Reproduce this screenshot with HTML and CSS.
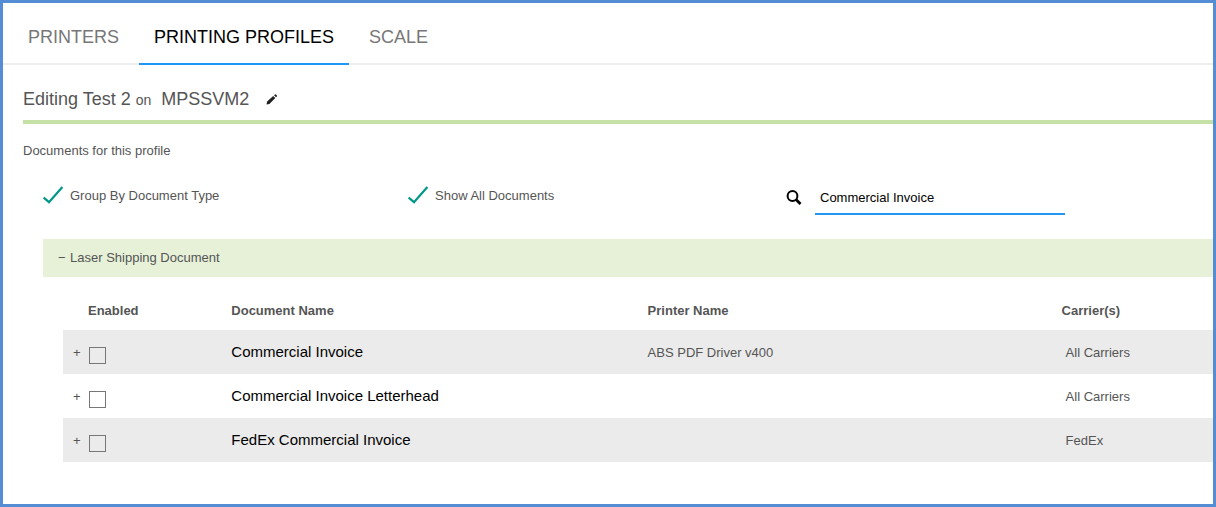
FILE: index.html
```html
<!DOCTYPE html>
<html lang="en">
<head>
<meta charset="utf-8">
<title>Printing Profiles</title>
<link rel="stylesheet" href="styles.css">
</head>
<body>
<div class="frame">
  <nav class="tabs">
    <a class="tab" href="#printers">PRINTERS</a>
    <a class="tab tab-active" href="#profiles" aria-current="page">PRINTING PROFILES</a>
    <a class="tab" href="#scale">SCALE</a>
  </nav>
  <main class="content">
    <header class="title-bar">
      <h1 class="title">Editing Test 2 <small class="title-on">on</small>&nbsp; MPSSVM2</h1>
      <button class="edit" type="button" aria-label="Edit profile">
        <svg width="12" height="12" viewBox="0 0 12 12"><path d="M.5 10.500l.6-2.900L7.200 1.900l2.100 2.100L3.400 9.900z M8 1.300l1-.9q.5-.3.9.1l1 1q.3.4-.1.9l-.8.9z" fill="#222"/></svg>
      </button>
    </header>
    <p class="subtitle">Documents for this profile</p>
    <div class="filters">
      <div class="filter">
        <input class="tick" type="checkbox" id="group" checked>
        <svg class="check" width="20" height="18" viewBox="0 0 20 18"><path d="M.6 11.500L6 16.200L19.400 1" fill="none" stroke="#009688" stroke-width="2.200"/></svg>
        <label for="group">Group By Document Type</label>
      </div>
      <div class="filter">
        <input class="tick" type="checkbox" id="all" checked>
        <svg class="check" width="20" height="18" viewBox="0 0 20 18"><path d="M.6 11.500L6 16.200L19.400 1" fill="none" stroke="#009688" stroke-width="2.200"/></svg>
        <label for="all">Show All Documents</label>
      </div>
      <div class="search">
        <svg width="16" height="16" viewBox="0 0 16 16" fill="none" stroke="#000"><circle cx="6.500" cy="6" r="4.900" stroke-width="2"/><path d="M10 9.500L14.500 14" stroke-width="2.800"/></svg>
        <input class="search-input" type="text" aria-label="Search documents" value="Commercial Invoice">
      </div>
    </div>
    <section class="group">
      <button class="group-head" type="button" aria-expanded="true"><span class="sign">−</span>Laser Shipping Document</button>
      <table class="docs">
        <thead>
          <tr><th class="col-enabled">Enabled</th><th class="col-name">Document Name</th><th class="col-printer">Printer Name</th><th>Carrier(s)</th></tr>
        </thead>
        <tbody>
          <tr>
            <td><div class="enable"><button class="expand" type="button" aria-label="Expand">+</button><input class="box" type="checkbox" aria-label="Enable Commercial Invoice"></div></td>
            <td class="name">Commercial Invoice</td><td>ABS PDF Driver v400</td><td class="carrier">All Carriers</td>
          </tr>
          <tr>
            <td><div class="enable"><button class="expand" type="button" aria-label="Expand">+</button><input class="box" type="checkbox" aria-label="Enable Commercial Invoice Letterhead"></div></td>
            <td class="name">Commercial Invoice Letterhead</td><td></td><td class="carrier">All Carriers</td>
          </tr>
          <tr>
            <td><div class="enable"><button class="expand" type="button" aria-label="Expand">+</button><input class="box" type="checkbox" aria-label="Enable FedEx Commercial Invoice"></div></td>
            <td class="name">FedEx Commercial Invoice</td><td></td><td class="carrier">FedEx</td>
          </tr>
        </tbody>
      </table>
    </section>
  </main>
</div>
</body>
</html>
```
FILE: styles.css
```css
* { box-sizing: border-box; }
body {
  margin: 0;
  font: 13px/20px "Liberation Sans", Arial, sans-serif;
  color: #555;
  background: #fff;
}
button, input { font: inherit; color: inherit; margin: 0; }
button { background: none; border: 0; padding: 0; text-align: left; cursor: pointer; }
.frame { min-height: 100vh; border: 3px solid #548dd4; }

.tabs {
  display: flex;
  gap: 5px;
  padding: 0 10px;
  box-shadow: inset 0 -2px #eee;
}
.tab {
  padding: 23px 15px 15px;
  border-bottom: 2px solid transparent;
  font-size: 18px;
  line-height: 22px;
  color: #777;
  text-decoration: none;
}
.tab-active { color: #000; border-color: #2196f3; }

.content { padding-left: 20px; }
.title-bar {
  display: flex;
  align-items: center;
  gap: 17px;
  padding: 22px 0 7px;
  border-bottom: 4px solid #c5e1a5;
}
.title { margin: 0; font-size: 18px; line-height: 25px; font-weight: 400; }
.title-on { font-size: 14px; }
.edit { display: flex; }
.subtitle { margin: 0; padding-top: 17px; }

.filters {
  display: grid;
  grid-template-columns: 365fr 378fr 427fr;
  align-items: start;
  padding: 19px 0 24px 20px;
}
.filter { display: flex; gap: 7px; position: relative; padding-top: 6px; }
.tick { position: absolute; width: 20px; height: 18px; opacity: 0; }
.tick:not(:checked) + .check { opacity: 0.2; }
.search { display: flex; align-items: center; gap: 13px; }
.search-input {
  width: 250px;
  height: 35px;
  padding: 1px 5px 0;
  border: 0;
  border-bottom: 2px solid #2196f3;
  outline: 0;
  color: #000;
  background: none;
}

.group { padding-left: 20px; }
.group-head {
  display: flex;
  width: 100%;
  padding: 9px 15px;
  background: #e6f1d8;
}
.sign { width: 12px; }
.docs {
  width: calc(100% - 20px);
  margin: 13px 0 0 20px;
  table-layout: fixed;
  border-collapse: collapse;
}
th, td { padding: 2px 5px 0; height: 44px; text-align: left; }
th { height: 40px; }
th.col-enabled { width: 14.2%; padding-left: 25px; }
.col-name { width: 36.2%; }
.col-printer { width: 36%; }
tbody tr:nth-child(odd) { background: #ebebeb; }
td.name { padding-top: 0; font-size: 15px; color: #000; }
td.carrier { padding-left: 9px; }
.enable { display: flex; align-items: center; gap: 8px; padding-left: 5px; }
.expand { width: 8px; }
.box {
  appearance: none;
  width: 17px;
  height: 17px;
  margin-top: 4px;
  border: 1px solid #777;
}
.box:checked { background: #009688; }
```
